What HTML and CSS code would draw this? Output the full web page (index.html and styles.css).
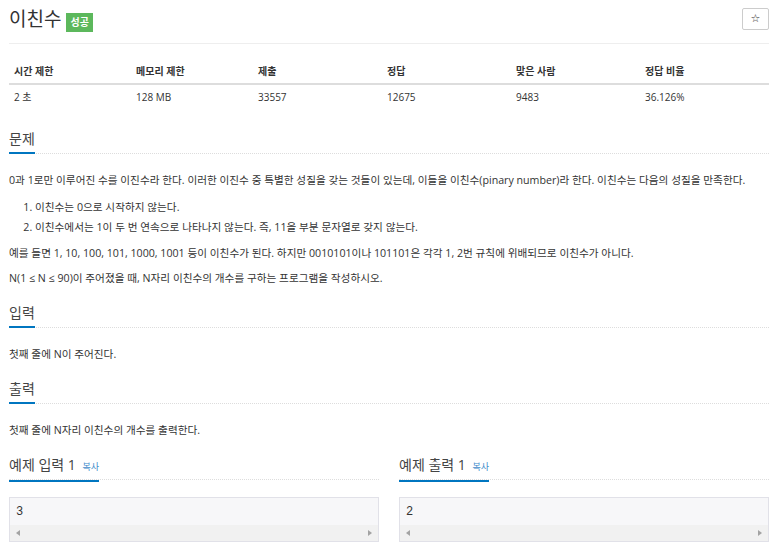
FILE: index.html
```html
<!DOCTYPE html>
<html lang="ko">
<head>
<meta charset="utf-8">
<title>이친수</title>
<link rel="stylesheet" href="styles.css">
</head>
<body>
<div class="container">
  <div class="page-header">
    <div class="title-wrap">
      <h1 class="title">이친수</h1>
      <span class="badge">성공</span>
    </div>
    <button class="star-btn" type="button">☆</button>
  </div>

  <table class="info">
    <colgroup>
      <col class="c1"><col class="c2"><col class="c3"><col class="c4"><col class="c5"><col class="c6">
    </colgroup>
    <thead>
      <tr><th>시간 제한</th><th>메모리 제한</th><th>제출</th><th>정답</th><th>맞은 사람</th><th>정답 비율</th></tr>
    </thead>
    <tbody>
      <tr><td>2 초</td><td>128 MB</td><td>33557</td><td>12675</td><td>9483</td><td>36.126%</td></tr>
    </tbody>
  </table>

  <section class="section first">
    <h2 class="headline"><span>문제</span></h2>
    <p>0과 1로만 이루어진 수를 이진수라 한다. 이러한 이진수 중 특별한 성질을 갖는 것들이 있는데, 이들을 이친수(pinary number)라 한다. 이친수는 다음의 성질을 만족한다.</p>
    <ol>
      <li>이친수는 0으로 시작하지 않는다.</li>
      <li>이친수에서는 1이 두 번 연속으로 나타나지 않는다. 즉, 11을 부분 문자열로 갖지 않는다.</li>
    </ol>
    <p>예를 들면 1, 10, 100, 101, 1000, 1001 등이 이친수가 된다. 하지만 0010101이나 101101은 각각 1, 2번 규칙에 위배되므로 이친수가 아니다.</p>
    <p>N(1 ≤ N ≤ 90)이 주어졌을 때, N자리 이친수의 개수를 구하는 프로그램을 작성하시오.</p>
  </section>

  <section class="section">
    <h2 class="headline"><span>입력</span></h2>
    <p>첫째 줄에 N이 주어진다.</p>
  </section>

  <section class="section">
    <h2 class="headline"><span>출력</span></h2>
    <p>첫째 줄에 N자리 이친수의 개수를 출력한다.</p>
  </section>

  <div class="samples">
    <div class="sample">
      <h2 class="headline"><span>예제 입력 1 <a class="copy">복사</a></span></h2>
      <div class="pre-box">
        <pre>3</pre>
        <div class="hscroll"><i class="arr left"></i><i class="arr right"></i></div>
      </div>
    </div>
    <div class="sample">
      <h2 class="headline"><span>예제 출력 1 <a class="copy">복사</a></span></h2>
      <div class="pre-box">
        <pre>2</pre>
        <div class="hscroll"><i class="arr left"></i><i class="arr right"></i></div>
      </div>
    </div>
  </div>
</div>
</body>
</html>
```

FILE: styles.css
```css
html, body {
  margin: 0;
  padding: 0;
  background: #fff;
  overflow: hidden;
}
body {
  font-family: "Open Sans", "Noto Sans CJK KR", sans-serif;
  color: #333;
  font-size: 10.65px;
}
.container {
  width: 760px;
  margin-left: 9px;
}
.page-header {
  display: flex;
  justify-content: space-between;
  align-items: flex-start;
  height: 43px;
  border-bottom: 1px solid #eee;
}
.title-wrap {
  display: flex;
  align-items: flex-start;
  gap: 5px;
  padding-top: 7px;
}
.title {
  margin: 0;
  font-size: 19px;
  font-weight: 400;
  line-height: 24px;
  color: #333;
}
.badge {
  margin-top: 6px;
  display: inline-block;
  background: #5cb85c;
  color: #fff;
  font-weight: 700;
  font-size: 10px;
  line-height: 19px;
  height: 19px;
  padding: 0 4px;
}
.star-btn {
  margin-top: 8px;
  width: 27px;
  height: 22px;
  padding: 0;
  border: 1px solid #ccc;
  border-radius: 2px;
  background: #fff;
  color: #333;
  font-size: 11px;
  font-family: "DejaVu Sans", sans-serif;
  line-height: 20px;
}
.info {
  margin-top: 15px;
  width: 760px;
  border-collapse: collapse;
  table-layout: fixed;
}
.c1, .c2 { width: 122px; }
.c3, .c4, .c5, .c6 { width: 129px; }
.info th, .info td {
  text-align: left;
  padding: 5px 5px;
  line-height: 14px;
  font-size: 10px;
}
.info th {
  font-weight: 700;
  border-bottom: 2px solid #ddd;
}
.section.first { margin-top: 20px; }
.section { margin-bottom: 17px; }
.headline {
  margin: 0 0 18px;
  font-size: 14px;
  font-weight: 400;
  line-height: 20px;
  color: #444;
  border-bottom: 1px dotted #ddd;
  height: 24px;
}
.headline span {
  display: inline-block;
  padding-bottom: 3px;
  border-bottom: 2px solid #0076c0;
}
.copy {
  font-size: 9px;
  color: #428bca;
  margin-left: 3px;
}
p {
  margin: 0 0 9px;
  line-height: 16px;
}
.section p:last-child { margin-bottom: 0; }
ol {
  margin: 2px 0 8px;
  padding-left: 26px;
}
ol li {
  line-height: 20px;
}
.samples {
  display: grid;
  grid-template-columns: 1fr 1fr;
  column-gap: 20px;
}
.sample .headline { margin-bottom: 17px; }
.pre-box {
  border: 1px solid #e1e1e8;
  background: #f7f7f9;
}
pre {
  margin: 0;
  padding: 7px 6px 6px;
  font-family: "Liberation Mono", monospace;
  font-size: 12px;
  line-height: 14px;
  color: #333;
}
.hscroll {
  height: 16px;
  background: #f1f1f1;
  display: flex;
  justify-content: space-between;
  align-items: center;
  padding: 0 6px;
}
.arr {
  width: 0;
  height: 0;
  border-top: 3.5px solid transparent;
  border-bottom: 3.5px solid transparent;
}
.arr.left { border-right: 4px solid #a3a3a3; }
.arr.right { border-left: 4px solid #a3a3a3; }
```
